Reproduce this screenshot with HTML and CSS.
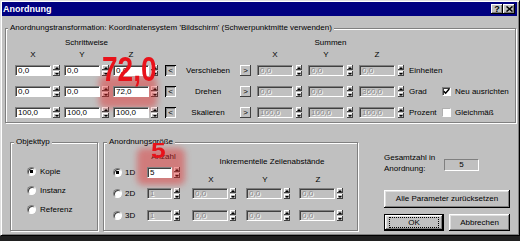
FILE: index.html
```html
<!DOCTYPE html>
<html lang="de">
<head>
<meta charset="utf-8">
<link rel="stylesheet" href="styles.css">
<title>Anordnung</title>
</head>
<body>
<div class="win">
<div class="glow glow-rot"></div>
<div class="glow glow-anz"></div>

<div class="caption">
  <span class="caption-text">Anordnung</span>
  <span class="capbtn">?</span>
  <span class="capbtn"><svg width="7" height="6" viewBox="0 0 7 6"><path d="M0.5 0.5L6.5 5.5M6.5 0.5L0.5 5.5" stroke="#000" stroke-width="1.5"/></svg></span>
</div>

<fieldset class="grp grp-main">
  <legend>Anordnungstransformation: Koordinatensystem 'Bildschirm' (Schwerpunktmitte verwenden)</legend>
  <div class="tf">
    <div class="trow heads">
      <span class="sect sect-l">Schrittweise</span>
      <span class="sect sect-r">Summen</span>
    </div>
    <div class="trow axes">
      <span class="ax">X</span><span class="ax">Y</span><span class="ax ax-end">Z</span>
      <span class="ax ax-r">X</span><span class="ax ax-r">Y</span><span class="ax ax-r">Z</span>
    </div>
    <div class="trow">
      <span class="sf"><span class="edit">0,0</span><span class="spin"><i></i><i></i></span></span>
      <span class="sf"><span class="edit">0,0</span><span class="spin"><i></i><i></i></span></span>
      <span class="sf sf-end"><span class="edit">0,0</span><span class="spin"><i></i><i></i></span></span>
      <span class="abtn abtn-in">&lt;</span>
      <span class="rl">Verschieben</span>
      <span class="abtn abtn-out">&gt;</span>
      <span class="sf sf-r"><span class="edit off">0,0</span><span class="spin"><i></i><i></i></span></span>
      <span class="sf sf-r"><span class="edit off">0,0</span><span class="spin"><i></i><i></i></span></span>
      <span class="sf sf-r sf-last"><span class="edit off">0,0</span><span class="spin"><i></i><i></i></span></span>
      <span class="unit">Einheiten</span>
    </div>
    <div class="trow">
      <span class="sf"><span class="edit">0,0</span><span class="spin"><i></i><i></i></span></span>
      <span class="sf"><span class="edit">0,0</span><span class="spin"><i></i><i></i></span></span>
      <span class="sf sf-end"><span class="edit">72,0</span><span class="spin"><i></i><i></i></span></span>
      <span class="abtn abtn-in">&lt;</span>
      <span class="rl">Drehen</span>
      <span class="abtn abtn-out">&gt;</span>
      <span class="sf sf-r"><span class="edit off">0,0</span><span class="spin"><i></i><i></i></span></span>
      <span class="sf sf-r"><span class="edit off">0,0</span><span class="spin"><i></i><i></i></span></span>
      <span class="sf sf-r sf-last"><span class="edit off">360,0</span><span class="spin"><i></i><i></i></span></span>
      <span class="unit">Grad</span>
      <span class="chk"><svg width="7" height="7" viewBox="0 0 7 7"><path d="M0.8 3.2L2.6 5.2L6.2 1" fill="none" stroke="#000" stroke-width="1.5"/></svg></span>
      <span>Neu ausrichten</span>
    </div>
    <div class="trow">
      <span class="sf"><span class="edit">100,0</span><span class="spin"><i></i><i></i></span></span>
      <span class="sf"><span class="edit">100,0</span><span class="spin"><i></i><i></i></span></span>
      <span class="sf sf-end"><span class="edit">100,0</span><span class="spin"><i></i><i></i></span></span>
      <span class="abtn abtn-in">&lt;</span>
      <span class="rl">Skalieren</span>
      <span class="abtn abtn-out">&gt;</span>
      <span class="sf sf-r"><span class="edit off">100,0</span><span class="spin"><i></i><i></i></span></span>
      <span class="sf sf-r"><span class="edit off">100,0</span><span class="spin"><i></i><i></i></span></span>
      <span class="sf sf-r sf-last"><span class="edit off">100,0</span><span class="spin"><i></i><i></i></span></span>
      <span class="unit">Prozent</span>
      <span class="chk chk-off"></span>
      <span>Gleichmäß</span>
    </div>
  </div>
</fieldset>

<div class="lower">
  <fieldset class="grp grp-obj">
    <legend>Objekttyp</legend>
    <div class="radios">
      <span class="opt"><span class="rad on"></span>Kopie</span>
      <span class="opt"><span class="rad"></span>Instanz</span>
      <span class="opt"><span class="rad"></span>Referenz</span>
    </div>
  </fieldset>

  <fieldset class="grp grp-size">
    <legend>Anordnungsgröße</legend>
    <div class="sz">
      <span></span>
      <span class="anz">Anzahl</span>
      <span class="inkr">Inkrementelle Zeilenabstände</span>

      <span class="opt"><span class="rad on"></span>1D</span>
      <span class="sf sf-b"><span class="edit cnt">5</span><span class="spin"><i></i><i></i></span></span>
      <span class="ax ax-b">X</span>
      <span class="ax ax-b">Y</span>
      <span class="ax ax-b">Z</span>

      <span class="opt"><span class="rad"></span>2D</span>
      <span class="sf sf-b"><span class="edit cnt off">1</span><span class="spin"><i></i><i></i></span></span>
      <span class="sf sf-b"><span class="edit off">0,0</span><span class="spin"><i></i><i></i></span></span>
      <span class="sf sf-b"><span class="edit off">0,0</span><span class="spin"><i></i><i></i></span></span>
      <span class="sf sf-b"><span class="edit off">0,0</span><span class="spin"><i></i><i></i></span></span>

      <span class="opt"><span class="rad"></span>3D</span>
      <span class="sf sf-b"><span class="edit cnt off">1</span><span class="spin"><i></i><i></i></span></span>
      <span class="sf sf-b"><span class="edit off">0,0</span><span class="spin"><i></i><i></i></span></span>
      <span class="sf sf-b"><span class="edit off">0,0</span><span class="spin"><i></i><i></i></span></span>
      <span class="sf sf-b"><span class="edit off">0,0</span><span class="spin"><i></i><i></i></span></span>
    </div>
  </fieldset>

  <div class="side">
    <div class="total">
      <span class="total-lbl">Gesamtzahl in<br>Anordnung:</span>
      <span class="total-val">5</span>
    </div>
    <span class="btn btn-wide">Alle Parameter zurücksetzen</span>
    <div class="btnrow">
      <span class="btn btn-def"><span class="focus">OK</span></span>
      <span class="btn">Abbrechen</span>
    </div>
  </div>
</div>

<span class="big big-72">72,0</span>
<span class="big big-5">5</span>
</div>
</body>
</html>
```

FILE: styles.css
```css
* { box-sizing: border-box; }
body { margin: 0; background: #202020; font: 8px/10px "Liberation Sans", Arial, sans-serif; color: #000; }

/* window frame */
.win { position: relative; width: 520px; height: 236px; display: flex; flex-direction: column; padding: 1px 2px 2px 1px;
  background: #c0c0c0; border: 1px solid; border-color: #dfdfdf #000 #000 #dfdfdf;
  box-shadow: inset 1px 1px #fff, inset -1px -1px #808080; }

.caption { height: 14px; display: flex; align-items: center; padding: 0 2px 0 1px; background: #000080; color: #fff; }
.caption-text { flex: 1; font-weight: bold; font-size: 9px; }
.capbtn { width: 12px; height: 10px; display: flex; align-items: center; justify-content: center; background: #c0c0c0; color: #000;
  font-weight: bold; font-size: 9px; line-height: 10px; box-shadow: inset -1px -1px #000, inset 1px 1px #fff, inset -2px -2px #808080; }

/* group boxes */
.grp { margin: 0; padding: 0; min-width: 0; border: 1px solid #808080; box-shadow: inset 1px 1px #fff, 1px 1px #fff; }
.grp legend { margin-left: 3px; padding: 0 2px; line-height: 10px; background: #c0c0c0; }
.grp-main { margin: 7px 0 0 3px; width: 511px; }
.grp-main legend { margin-left: 2px; }

.tf { padding: 5px 0 4px 9px; }
.trow { display: flex; align-items: center; height: 11px; margin-top: 10px; white-space: nowrap; }
.heads { height: 10px; margin-top: 0; }
.axes { height: 10px; margin-top: 2px; }
.axes + .trow { margin-top: 5px; }

.sect { text-align: center; }
.sect-l { width: 143px; }
.sect-r { width: 147px; margin-left: 99px; }

.ax { width: 36px; margin-right: 13px; text-align: center; }
.ax-end { margin-right: 108px; }
.ax-r { margin-right: 15px; }

/* edit + spinner */
.sf { display: flex; gap: 2px; margin-right: 4px; }
.sf-end { margin-right: 7px; }
.sf-r { gap: 3px; margin-right: 6px; }
.sf-r .spin, .sf-b .spin { width: 6px; }
.sf-last { margin-right: 5px; }
.sf-b { margin-right: 0; }

.edit { position: relative; width: 36px; height: 11px; padding-left: 2px; line-height: 9px; white-space: nowrap; overflow: hidden;
  background: #fff; border: 1px solid; border-color: #808080 #fff #fff #808080; box-shadow: inset 1px 1px #404040; }
.edit.off { background: #c0c0c0; color: #8a8a8a; text-shadow: 1px 1px #fff; }
.edit.cnt { width: 25px; }

.spin { width: 7px; height: 11px; display: flex; flex-direction: column; gap: 1px; }
.spin i { flex: 1; display: flex; align-items: center; justify-content: center; background: #c0c0c0;
  box-shadow: inset -1px -1px #404040, inset 1px 1px #fff; }
.spin i::after { content: ""; border: 2px solid transparent; border-top: 0; border-bottom: 2px solid #000; }
.spin i + i::after { border-bottom: 0; border-top: 2px solid #000; border-bottom-color: transparent; }

.abtn { width: 11px; height: 11px; display: flex; align-items: center; justify-content: center; font-size: 8px; background: #c0c0c0;
  box-shadow: inset -1px -1px #404040, inset 1px 1px #fff; }
.abtn-in { box-shadow: inset 1px 1px #000, inset -1px -1px #fff, inset 2px 2px #808080; }
.abtn-out { margin-right: 6px; }
.rl { width: 64px; text-align: center; }
.unit { width: 33px; }

.chk { width: 9px; height: 9px; margin-right: 4px; display: flex; align-items: center; justify-content: center; background: #fff;
  border: 1px solid; border-color: #808080 #fff #fff #808080; box-shadow: inset 1px 1px #404040; }
.chk-off { border-color: #b0b0b0 #fff #fff #b0b0b0; box-shadow: none; }

/* lower part */
.lower { display: flex; height: 94px; margin-top: 14px; }
.grp-obj { width: 88px; margin-left: 8px; }
.grp-size { width: 255px; margin-left: 5px; }

.radios { display: flex; flex-direction: column; gap: 8px; padding: 19px 0 0 16px; }
.opt { display: flex; align-items: center; gap: 4px; height: 11px; white-space: nowrap; }
.rad { width: 9px; height: 9px; border-radius: 50%; background: #fff; border: 1px solid; border-color: #808080 #fff #fff #808080;
  box-shadow: inset 1px 1px #404040; }
.rad.on { background: radial-gradient(circle, #000 1.5px, #fff 2px); }

.sz { display: grid; grid-template-columns: 34px 45px 54px 53px 45px; grid-template-rows: 15px 21px 22px 11px; padding: 5px 0 0 9px; }
.sz .opt { align-self: start; gap: 3px; }
.sz .sf { align-self: start; }
.anz { width: 33px; text-align: center; }
.inkr { grid-column: span 3; align-self: end; padding-left: 8px; text-align: center; white-space: nowrap; }
.ax-b { width: 38px; margin: 0 0 3px; align-self: end; }

.side { width: 126px; margin-left: 26px; display: flex; flex-direction: column; }
.total { display: flex; margin-top: 15px; }
.total-lbl { width: 60px; line-height: 11px; }
.total-val { width: 35px; height: 12px; margin-top: 7px; text-align: center; line-height: 10px;
  border: 1px solid; border-color: #808080 #fff #fff #808080; }

.btn { display: flex; align-items: center; justify-content: center; background: #c0c0c0; white-space: nowrap;
  box-shadow: inset -1px -1px #000, inset 1px 1px #fff, inset -2px -2px #808080, inset 2px 2px #dfdfdf; }
.btn-wide { height: 18px; margin-top: 16px; }
.btnrow { display: flex; gap: 5px; height: 17px; margin-top: 6px; }
.btnrow .btn { width: 61px; }
.btnrow .btn-def { width: 60px; border: 1px solid #000; }
.focus { width: 50px; height: 11px; line-height: 9px; text-align: center; border: 1px dotted #000; }

/* red annotations on top of the dialog */
.glow { position: absolute; background: rgba(228, 40, 40, .45); filter: blur(3px); border-radius: 6px; }
.glow-rot { left: 98px; top: 75px; width: 58px; height: 32px; }
.glow-anz { left: 136px; top: 147px; width: 48px; height: 37px; }
.big { position: absolute; color: #e8121a; font: bold 28px/28px "Liberation Sans", Arial, sans-serif; }
.big-72 { left: 101px; top: 55px; transform: scaleY(1.25); }
.big-5 { left: 150px; top: 139px; font-size: 22px; line-height: 22px; transform: scaleX(1.2); transform-origin: left center; }
```
